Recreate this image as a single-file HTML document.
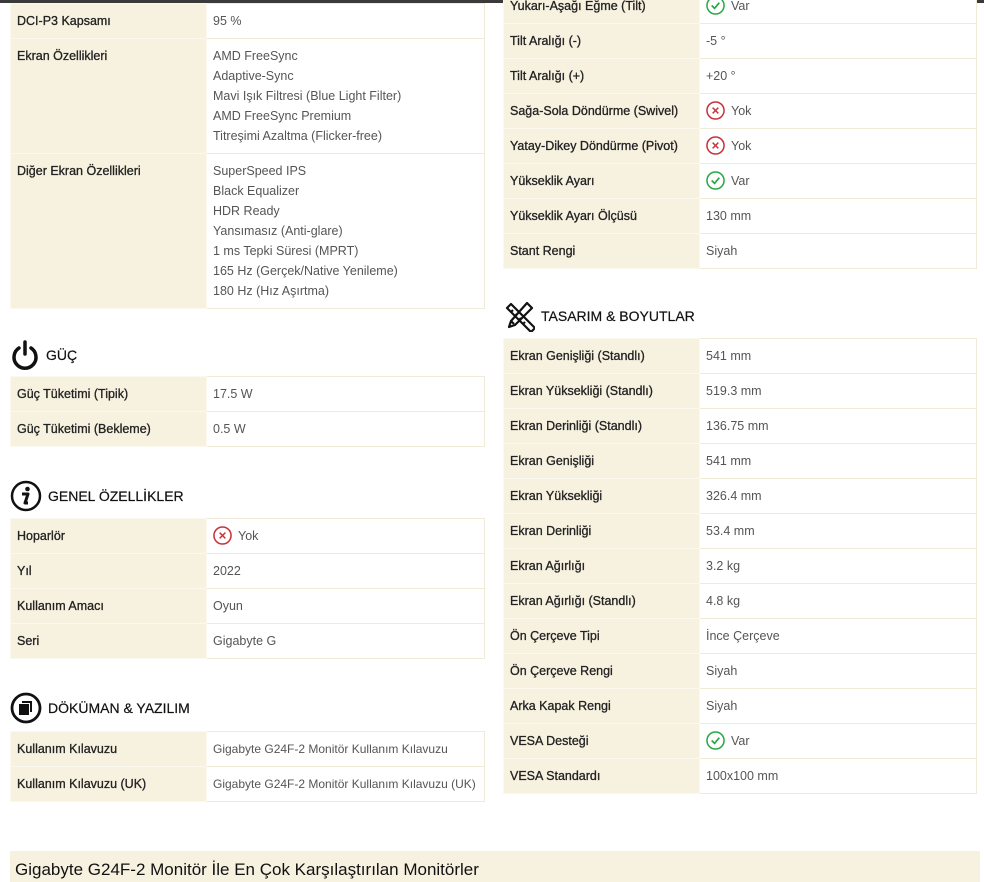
<!DOCTYPE html>
<html><head><meta charset="utf-8"><style>
*{margin:0;padding:0;box-sizing:border-box}
body{width:984px;height:882px;overflow:hidden;background:#fff;font-family:"Liberation Sans",sans-serif;position:relative}
.bar{position:absolute;left:0;top:0;width:984px;height:3px;background:#3a3a3a}
table{position:absolute;border-collapse:collapse;font-size:12.5px;table-layout:fixed}
td{border:1px solid #f0ead8;vertical-align:top;padding:7px 6px 7px;line-height:20px;white-space:nowrap;overflow:hidden}
td.l{background:#f7f1e0;color:#222;width:196px;border-color:#fbf8ef;-webkit-text-stroke:0.3px #222}
td.v{color:#555;background:#fff}
h3{position:absolute;font-size:14px;font-weight:normal;color:#111;display:flex;align-items:center;gap:6px;-webkit-text-stroke:0.2px #111}
.ok{color:#6fbf73}.no{color:#d0535a}
.ic{display:inline-block;vertical-align:middle;margin:-3px 6px 0 0}
.foot{position:absolute;left:10px;top:851px;width:970px;height:31px;background:#f7f1e0;font-size:17px;color:#111;padding:9px 0 0 5px}
</style></head><body>
<div class="bar"></div>

<table style="left:10px;top:3px;width:475px">
<tr><td class="l">DCI-P3 Kapsamı</td><td class="v">95 %</td></tr>
<tr><td class="l">Ekran Özellikleri</td><td class="v">AMD FreeSync<br>Adaptive-Sync<br>Mavi Işık Filtresi (Blue Light Filter)<br>AMD FreeSync Premium<br>Titreşimi Azaltma (Flicker-free)</td></tr>
<tr><td class="l">Diğer Ekran Özellikleri</td><td class="v">SuperSpeed IPS<br>Black Equalizer<br>HDR Ready<br>Yansımasız (Anti-glare)<br>1 ms Tepki Süresi (MPRT)<br>165 Hz (Gerçek/Native Yenileme)<br>180 Hz (Hız Aşırtma)</td></tr>
</table>

<h3 style="left:10px;top:339px"><svg width="30" height="32" viewBox="0 0 30 32"><path d="M9 9A11 11 0 1 0 21 9" fill="none" stroke="#111" stroke-width="3.5" stroke-linecap="round"/><line x1="15" y1="3" x2="15" y2="15" stroke="#111" stroke-width="3.5" stroke-linecap="round"/></svg>GÜÇ</h3>
<table style="left:10px;top:376px;width:475px">
<tr><td class="l">Güç Tüketimi (Tipik)</td><td class="v">17.5 W</td></tr>
<tr><td class="l">Güç Tüketimi (Bekleme)</td><td class="v">0.5 W</td></tr>
</table>

<h3 style="left:10px;top:480px"><svg width="32" height="32" viewBox="0 0 32 32"><circle cx="16" cy="16" r="14" fill="none" stroke="#111" stroke-width="2.5"/><circle cx="17.5" cy="9" r="2.3" fill="#111"/><path d="M12 14h6l-3 9h3" fill="none" stroke="#111" stroke-width="3" stroke-linejoin="round"/></svg>GENEL ÖZELLİKLER</h3>
<table style="left:10px;top:518px;width:475px">
<tr><td class="l">Hoparlör</td><td class="v no"><svg class="ic" width="19" height="19" viewBox="0 0 20 20"><circle cx="10" cy="10" r="9" fill="none" stroke="#c8323a" stroke-width="1.6"/><path d="M7 7l6 6M13 7l-6 6" stroke="#c8323a" stroke-width="1.6"/></svg>Yok</td></tr>
<tr><td class="l">Yıl</td><td class="v">2022</td></tr>
<tr><td class="l">Kullanım Amacı</td><td class="v">Oyun</td></tr>
<tr><td class="l">Seri</td><td class="v">Gigabyte G</td></tr>
</table>

<h3 style="left:10px;top:692px"><svg width="32" height="32" viewBox="0 0 32 32"><circle cx="16" cy="16" r="14" fill="none" stroke="#111" stroke-width="2.8"/><rect x="9" y="12" width="10" height="11" fill="#111"/><path d="M12 10h9v10" fill="none" stroke="#111" stroke-width="2"/></svg>DÖKÜMAN &amp; YAZILIM</h3>
<table style="left:10px;top:731px;width:475px">
<tr><td class="l">Kullanım Kılavuzu</td><td class="v" style="font-size:12px">Gigabyte G24F-2 Monitör Kullanım Kılavuzu</td></tr>
<tr><td class="l">Kullanım Kılavuzu (UK)</td><td class="v" style="font-size:12px">Gigabyte G24F-2 Monitör Kullanım Kılavuzu (UK)</td></tr>
</table>

<table style="left:503px;top:-12px;width:474px">
<tr><td class="l">Yukarı-Aşağı Eğme (Tilt)</td><td class="v ok"><svg class="ic" width="19" height="19" viewBox="0 0 20 20"><circle cx="10" cy="10" r="9" fill="none" stroke="#2aa845" stroke-width="1.6"/><path d="M6 10l3 3 5-6" fill="none" stroke="#2aa845" stroke-width="1.8"/></svg>Var</td></tr>
<tr><td class="l">Tilt Aralığı (-)</td><td class="v">-5 °</td></tr>
<tr><td class="l">Tilt Aralığı (+)</td><td class="v">+20 °</td></tr>
<tr><td class="l">Sağa-Sola Döndürme (Swivel)</td><td class="v no"><svg class="ic" width="19" height="19" viewBox="0 0 20 20"><circle cx="10" cy="10" r="9" fill="none" stroke="#c8323a" stroke-width="1.6"/><path d="M7 7l6 6M13 7l-6 6" stroke="#c8323a" stroke-width="1.6"/></svg>Yok</td></tr>
<tr><td class="l">Yatay-Dikey Döndürme (Pivot)</td><td class="v no"><svg class="ic" width="19" height="19" viewBox="0 0 20 20"><circle cx="10" cy="10" r="9" fill="none" stroke="#c8323a" stroke-width="1.6"/><path d="M7 7l6 6M13 7l-6 6" stroke="#c8323a" stroke-width="1.6"/></svg>Yok</td></tr>
<tr><td class="l">Yükseklik Ayarı</td><td class="v ok"><svg class="ic" width="19" height="19" viewBox="0 0 20 20"><circle cx="10" cy="10" r="9" fill="none" stroke="#2aa845" stroke-width="1.6"/><path d="M6 10l3 3 5-6" fill="none" stroke="#2aa845" stroke-width="1.8"/></svg>Var</td></tr>
<tr><td class="l">Yükseklik Ayarı Ölçüsü</td><td class="v">130 mm</td></tr>
<tr><td class="l">Stant Rengi</td><td class="v">Siyah</td></tr>
</table>

<h3 style="left:503px;top:300px"><svg width="32" height="32" viewBox="0 0 32 32" fill="none" stroke="#111" stroke-width="2.2" stroke-linejoin="round"><path d="M4 8l4-4 24 24-4 4z"/><path d="M8 12l2-2M12 16l2-2M16 20l2-2M20 24l2-2"/><path d="M24 3l5 5-17 17-6 2 2-6z"/><path d="M8 21l3 3"/></svg>TASARIM &amp; BOYUTLAR</h3>
<table style="left:503px;top:338px;width:474px">
<tr><td class="l">Ekran Genişliği (Standlı)</td><td class="v">541 mm</td></tr>
<tr><td class="l">Ekran Yüksekliği (Standlı)</td><td class="v">519.3 mm</td></tr>
<tr><td class="l">Ekran Derinliği (Standlı)</td><td class="v">136.75 mm</td></tr>
<tr><td class="l">Ekran Genişliği</td><td class="v">541 mm</td></tr>
<tr><td class="l">Ekran Yüksekliği</td><td class="v">326.4 mm</td></tr>
<tr><td class="l">Ekran Derinliği</td><td class="v">53.4 mm</td></tr>
<tr><td class="l">Ekran Ağırlığı</td><td class="v">3.2 kg</td></tr>
<tr><td class="l">Ekran Ağırlığı (Standlı)</td><td class="v">4.8 kg</td></tr>
<tr><td class="l">Ön Çerçeve Tipi</td><td class="v">İnce Çerçeve</td></tr>
<tr><td class="l">Ön Çerçeve Rengi</td><td class="v">Siyah</td></tr>
<tr><td class="l">Arka Kapak Rengi</td><td class="v">Siyah</td></tr>
<tr><td class="l">VESA Desteği</td><td class="v ok"><svg class="ic" width="19" height="19" viewBox="0 0 20 20"><circle cx="10" cy="10" r="9" fill="none" stroke="#2aa845" stroke-width="1.6"/><path d="M6 10l3 3 5-6" fill="none" stroke="#2aa845" stroke-width="1.8"/></svg>Var</td></tr>
<tr><td class="l">VESA Standardı</td><td class="v">100x100 mm</td></tr>
</table>

<div class="foot">Gigabyte G24F-2 Monitör İle En Çok Karşılaştırılan Monitörler</div>
</body></html>
